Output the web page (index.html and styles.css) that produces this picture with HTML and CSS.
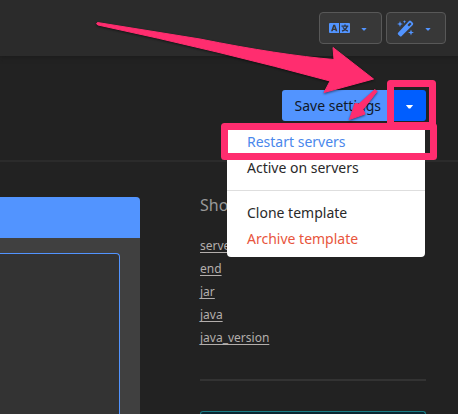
FILE: index.html
```html
<!DOCTYPE html>
<html lang="en">
<head>
<meta charset="utf-8">
<meta name="viewport" content="width=device-width, initial-scale=1">
<title>Template settings</title>
<link rel="stylesheet" href="styles.css">
</head>
<body>
<header class="topbar">
  <button class="tool" type="button" aria-label="Language">
    <svg class="icon" width="21" height="12" viewBox="0 0 21 12" aria-hidden="true">
      <path fill="currentColor" fill-rule="evenodd" d="M1 1H10V11H1Q0 11 0 10V2Q0 1 1 1ZM4.300 2.700L2 9.300H3.700L4.100 8H6.300L6.700 9.300H8.400L6.100 2.700ZM4.500 6.700L5.200 4.500L5.900 6.700Z"/>
      <path fill="currentColor" d="M11 1H20Q21 1 21 2V10Q21 11 20 11H11Z"/>
      <path fill="none" stroke="#2f3542" stroke-width="1.300" d="M12.500 4.200H19.300M16 2.500V4.200M18.200 4.400Q17 7.600 13 9.200M13.900 5.200Q15.500 8 18.900 9.200"/>
    </svg>
    <span class="caret"></span>
  </button>
  <button class="tool" type="button" aria-label="Appearance">
    <svg class="icon" width="17" height="17" viewBox="0 0 17 17" aria-hidden="true">
      <path fill="currentColor" fill-rule="evenodd" d="M1.100 12.800L12 1Q13 0 14 1L15.800 2.800Q16.800 3.800 15.800 4.900L4.700 16Q3.700 17 2.700 16L1.100 14.600Q.3 13.700 1.100 12.800ZM10.500 5L12 6.600L14.500 4L13 2.500Z"/>
      <path fill="currentColor" d="M3 1L3.800 3.200L6 4L3.800 4.800L3 7L2.200 4.800L0 4L2.200 3.200ZM7.500 0L8 1.200L9.200 1.700L8 2.200L7.500 3.400L7 2.200L5.800 1.700L7 1.200ZM14 9.500L14.800 11.700L17 12.500L14.800 13.300L14 15.500L13.200 13.300L11 12.500L13.200 11.700Z"/>
    </svg>
    <span class="caret"></span>
  </button>
</header>
<main>
  <div class="actions">
    <div class="split">
      <button class="save" type="button">Save settings</button>
      <button class="toggle" type="button" aria-label="More actions" aria-expanded="true"><span class="caret"></span></button>
      <div class="menu">
        <a class="item active" href="#restart">Restart servers</a>
        <a class="item" href="#active">Active on servers</a>
        <hr class="divider">
        <a class="item" href="#clone">Clone template</a>
        <a class="item danger" href="#archive">Archive template</a>
      </div>
    </div>
  </div>
  <div class="columns">
    <section class="panel">
      <div class="panel-head"></div>
      <div class="panel-body"><div class="editor"></div></div>
    </section>
    <aside class="side">
      <h2>Sho</h2>
      <ul>
        <li><a href="#server">serve</a></li>
        <li><a href="#end">end</a></li>
        <li><a href="#jar">jar</a></li>
        <li><a href="#java">java</a></li>
        <li><a href="#java_version">java_version</a></li>
      </ul>
      <hr class="rule">
      <div class="notice"></div>
    </aside>
  </div>
</main>
<svg class="marks" width="458" height="200" viewBox="0 0 458 200" aria-hidden="true">
  <g fill="none" stroke="#ff2d6f" stroke-width="7" stroke-linejoin="round">
    <rect x="390.500" y="83.500" width="42" height="42"/>
    <rect x="224.500" y="126.500" width="209" height="30"/>
  </g>
  <g class="arrows" fill="#ff2d6f" stroke="#ff2d6f" stroke-linejoin="round">
    <path d="M97.500 22.500Q95.500 24 98 25Q220 51 330 81L324 92.500L373.500 79L333 47.500L334 59.500Q280 55 200 39Z"/>
    <path d="M375 89.500L359 104L355 103.500L349.500 119.500L365 114L363 109.500L377 91.500Z"/>
  </g>
</svg>
</body>
</html>
```
FILE: styles.css
```css
* { box-sizing: border-box; }
body {
  margin: 0;
  height: 100vh;
  display: flex;
  flex-direction: column;
  overflow: hidden;
  background: #222;
  color: #b3aeac;
  font: 14px/26px "Noto Sans", "Open Sans", sans-serif;
}
button { font: inherit; border: 0; padding: 0; cursor: pointer; }
.topbar {
  flex: none;
  display: flex;
  justify-content: flex-end;
  gap: 4px;
  padding: 12px;
  background: #2b2b2b;
  box-shadow: 0 1px 5px #1a1a1a;
}
.tool {
  display: flex;
  align-items: center;
  justify-content: space-between;
  height: 32px;
  width: 60px;
  padding: 0 14px 0 10px;
  border: 1px solid #585858;
  border-radius: 4px;
  background: #383838;
  color: #5294ff;
}
.tool:first-child { width: 63px; padding-left: 9px; }
.caret {
  width: 6px;
  height: 3px;
  margin-top: 2px;
  background: currentColor;
  clip-path: polygon(0 0, 100% 0, 60% 100%, 40% 100%);
}
main { flex: 1; display: flex; flex-direction: column; min-height: 0; }
.actions {
  display: flex;
  justify-content: flex-end;
  padding: 34px 32px 39px 0;
  border-bottom: 2px solid #2b2b2b;
}
.split { position: relative; display: flex; height: 31px; }
.save { padding: 0 12px 0 13px; border-radius: 3px 0 0 3px; background: #5294ff; color: #111827; }
.toggle {
  display: flex;
  align-items: center;
  justify-content: center;
  width: 33px;
  border-radius: 0 3px 3px 0;
  background: #005eff;
  color: #fff;
}
.toggle .caret { width: 8px; height: 4px; }
.menu {
  position: absolute;
  top: 35px;
  right: 1px;
  width: 198px;
  padding: 4px 0 5px;
  border-radius: 4px;
  background: #fff;
}
.item { display: block; padding: 0 20px; color: #292929; text-decoration: none; }
.active { color: #4a87ec; }
.danger { color: #e8553c; }
.divider { height: 1px; margin: 9px 0; border: 0; background: #dedede; }
.columns {
  flex: 1;
  display: grid;
  grid-template-columns: 140px 1fr;
  grid-template-rows: minmax(0, 1fr);
  gap: 60px;
  padding: 35px 32px 0 0;
  min-height: 0;
}
.panel { display: flex; flex-direction: column; overflow: hidden; border-radius: 0 4px 0 0; background: #404040; }
.panel-head { height: 41px; background: #5294ff; }
.panel-body { flex: 1; display: flex; padding: 15px 20px 0 0; }
.editor { flex: 1; border: solid #5294ff; border-width: 1px 1px 0 0; border-radius: 0 4px 0 0; background: #333; }
.side { display: flex; flex-direction: column; min-height: 0; }
h2 { margin: -4px 0 17px; font-size: 16px; line-height: 24px; font-weight: 400; color: #999; }
ul { margin: 0; padding: 0; list-style: none; font-size: 12px; line-height: 23px; }
.side a { color: inherit; text-underline-offset: 2px; text-decoration-skip-ink: none; }
.rule { flex: none; width: 100%; height: 2px; margin: 30px 0; border: 0; background: #333; }
.notice { flex: 1; border: 1px solid #197c86; border-bottom: 0; border-radius: 4px 4px 0 0; background: #092632; }
.marks { position: absolute; top: 0; right: 0; pointer-events: none; }
.arrows { filter: drop-shadow(0 1px 1px #0008); }
```
